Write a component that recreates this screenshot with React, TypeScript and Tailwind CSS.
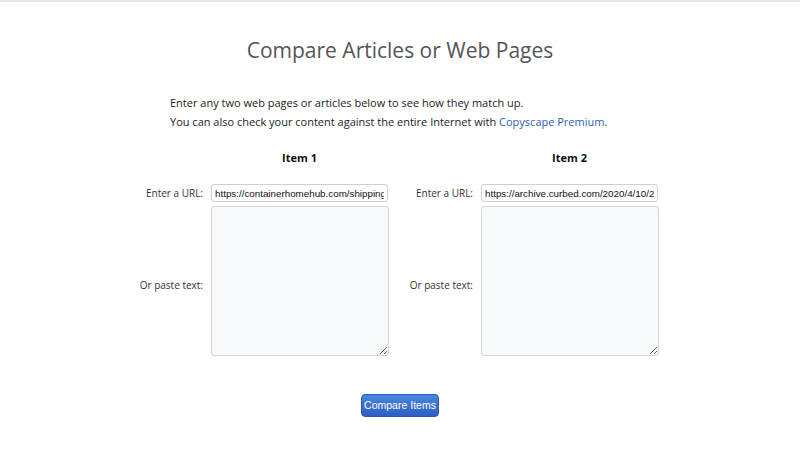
import React from 'react';

const items = [
    { title: 'Item 1', url: 'https://containerhomehub.com/shipping-container-homes/' },
    { title: 'Item 2', url: 'https://archive.curbed.com/2020/4/10/21215386/shipping-container-homes' },
];

const ItemColumn = ({ title, url }: { title: string; url: string }) => (
    <div className="grid grid-cols-[83px_177px] gap-x-2 items-center">
        <div />
        <div className="text-center font-bold text-[11px] leading-[18px] text-[#111]">{title}</div>

        <div className="col-span-2 h-[17px]" />

        <label className="text-right text-[10px] text-[#333] leading-[18px]">Enter a URL:</label>
        <input
            type="text"
            defaultValue={url}
            className="h-[18px] w-[177px] border border-[#cfcfcf] rounded-[3px] bg-white px-[3px] text-[9.8px] text-[#111] outline-none"
            style={{ fontFamily: '"Liberation Sans", Arial, sans-serif' }}
        />

        <div className="col-span-2 h-[4px]" />

        <label className="text-right text-[10px] text-[#333] leading-[18px] pt-[8px]">Or paste text:</label>
        <textarea className="h-[150px] w-[178px] border border-[#d4d4d4] rounded-[3px] bg-[#f8f9fa] outline-none block" />
    </div>
);

export default function App() {
    return (
        <div
            className="min-h-[464px] w-full bg-white border-t-2 border-[#e6e6e6]"
            style={{ fontFamily: '"Open Sans", "Noto Sans", sans-serif' }}
        >
            <h1 className="text-center text-[21px] leading-[32px] text-[#555] pt-[32px]">Compare Articles or Web Pages</h1>

            <div className="pl-[170px] pt-[27px] text-[11px] leading-[19px] text-[#222]">
                <p>Enter any two web pages or articles below to see how they match up.</p>
                <p>
                    You can also check your content against the entire Internet with{' '}
                    <a href="#" className="text-[#2c5fb3]">
                        Copyscape Premium
                    </a>
                    .
                </p>
            </div>

            <div className="flex pl-[120px] gap-[2px] pt-[18px]">
                {items.map((item) => (
                    <ItemColumn key={item.title} title={item.title} url={item.url} />
                ))}
            </div>

            <div className="flex justify-center pt-[38px]">
                <button
                    className="h-[23px] w-[78px] px-0 whitespace-nowrap rounded-[4px] border border-[#2a58b5] bg-gradient-to-b from-[#4c84dd] to-[#2d5ec4] text-white text-[10.5px] leading-[21px]"
                    style={{ fontFamily: '"Liberation Sans", Arial, sans-serif' }}
                >
                    Compare Items
                </button>
            </div>
        </div>
    );
}
